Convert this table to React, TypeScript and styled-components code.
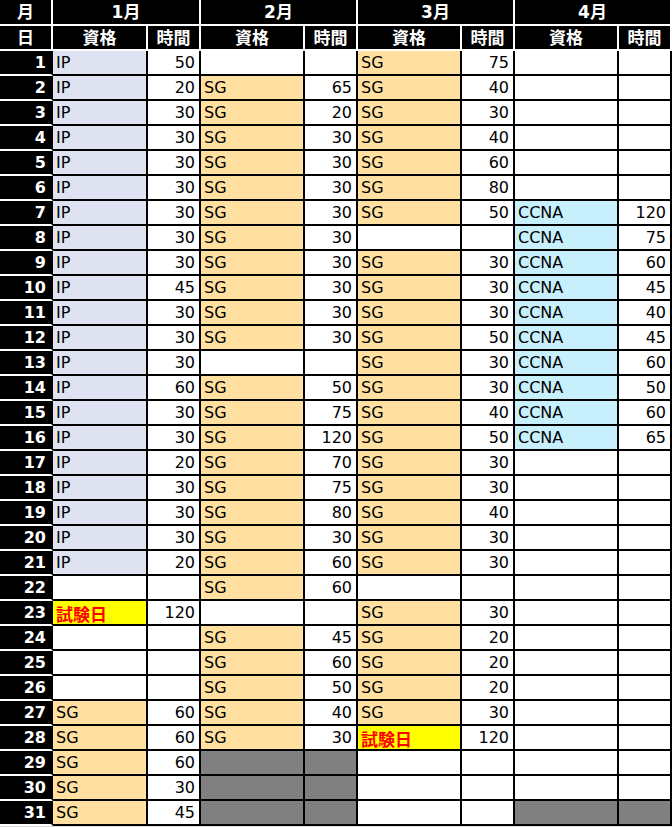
import styled, { createGlobalStyle } from "styled-components";

const GlobalStyle = createGlobalStyle`
  html, body {
    margin: 0;
    padding: 0;
    background: #ffffff;
  }
  body {
    font-family: "DejaVu Sans", "Noto Sans CJK JP", sans-serif;
  }
`;

type Kind = "IP" | "SG" | "CCNA" | "EXAM" | "EMPTY" | "GRAY";
type Entry = { kind: Kind; time?: number };

const fills: Record<Kind, string> = {
  IP: "#dfe3f1",
  SG: "#ffe0a0",
  CCNA: "#c8effc",
  EXAM: "#ffff00",
  EMPTY: "#ffffff",
  GRAY: "#808080",
};

const labels: Record<Kind, string> = {
  IP: "IP",
  SG: "SG",
  CCNA: "CCNA",
  EXAM: "試験日",
  EMPTY: "",
  GRAY: "",
};

const run = (kind: Kind, times: number[]): Entry[] =>
  times.map((time) => ({ kind, time }));
const blank = (n: number, kind: Kind = "EMPTY"): Entry[] =>
  Array.from({ length: n }, () => ({ kind }));

const months: { name: string; days: Entry[] }[] = [
  {
    name: "1月",
    days: [
      ...run("IP", [50, 20, 30, 30, 30, 30, 30, 30, 30, 45, 30, 30, 30, 60, 30, 30, 20, 30, 30, 30, 20]),
      ...blank(1),
      ...run("EXAM", [120]),
      ...blank(3),
      ...run("SG", [60, 60, 60, 30, 45]),
    ],
  },
  {
    name: "2月",
    days: [
      ...blank(1),
      ...run("SG", [65, 20, 30, 30, 30, 30, 30, 30, 30, 30, 30]),
      ...blank(1),
      ...run("SG", [50, 75, 120, 70, 75, 80, 30, 60, 60]),
      ...blank(1),
      ...run("SG", [45, 60, 50, 40, 30]),
      ...blank(3, "GRAY"),
    ],
  },
  {
    name: "3月",
    days: [
      ...run("SG", [75, 40, 30, 40, 60, 80, 50]),
      ...blank(1),
      ...run("SG", [30, 30, 30, 50, 30, 30, 40, 50, 30, 30, 40, 30, 30]),
      ...blank(1),
      ...run("SG", [30, 20, 20, 20, 30]),
      ...run("EXAM", [120]),
      ...blank(3),
    ],
  },
  {
    name: "4月",
    days: [
      ...blank(6),
      ...run("CCNA", [120, 75, 60, 45, 40, 45, 60, 50, 60, 65]),
      ...blank(14),
      ...blank(1, "GRAY"),
    ],
  },
];

const Sheet = styled.div`
  display: grid;
  grid-template-columns: 53px 95px 53px 104px 53px 104px 53px 104px 53px;
  grid-template-rows: 26px;
  grid-auto-rows: 25px;
  width: 672px;
  font-size: 16px;
  border-bottom: 1px solid #d9d9d9;
`;

const BaseCell = styled.div`
  box-sizing: border-box;
  display: flex;
  align-items: center;
  border-right: 2px solid #000000;
  border-bottom: 2px solid #000000;
  white-space: nowrap;
  overflow: hidden;
  line-height: 1;
`;

const HeadCell = styled(BaseCell)<{ $span?: number }>`
  grid-column: span ${(p) => p.$span ?? 1};
  justify-content: center;
  background: #000000;
  color: #ffffff;
  font-size: 17px;
  font-weight: bold;
  border-color: #ffffff;
  padding-top: 1px;
`;

const DayCell = styled(BaseCell)`
  justify-content: flex-end;
  padding: 1px 5px 0 0;
  background: #000000;
  color: #ffffff;
  font-weight: bold;
  border-bottom-color: #ffffff;
`;

const NameCell = styled(BaseCell)<{ $kind: Kind }>`
  padding: 1px 0 0 3px;
  background: ${(p) => fills[p.$kind]};
  color: ${(p) => (p.$kind === "EXAM" ? "#ff0000" : "#000000")};
  font-weight: ${(p) => (p.$kind === "EXAM" ? "bold" : "normal")};
  font-size: ${(p) => (p.$kind === "EXAM" ? "17px" : "16px")};
  font-family: ${(p) =>
    p.$kind === "EXAM" ? '"Noto Sans CJK JP", sans-serif' : "inherit"};
`;

const TimeCell = styled(BaseCell)<{ $gray?: boolean }>`
  justify-content: flex-end;
  padding: 1px 4px 0 0;
  background: ${(p) => (p.$gray ? fills.GRAY : "#ffffff")};
  color: #000000;
`;

const days = Array.from({ length: 31 }, (_, i) => i + 1);

export default function App() {
  return (
    <>
      <GlobalStyle />
      <Sheet>
        <HeadCell>月</HeadCell>
        {months.map((m) => (
          <HeadCell key={m.name} $span={2}>
            {m.name}
          </HeadCell>
        ))}
        <HeadCell>日</HeadCell>
        {months.map((m) => [
          <HeadCell key={m.name + "q"}>資格</HeadCell>,
          <HeadCell key={m.name + "t"}>時間</HeadCell>,
        ])}
        {days.map((d) => [
          <DayCell key={"d" + d}>{d}</DayCell>,
          ...months.map((m) => {
            const e = m.days[d - 1];
            return [
              <NameCell key={m.name + d + "q"} $kind={e.kind}>
                {labels[e.kind]}
              </NameCell>,
              <TimeCell key={m.name + d + "t"} $gray={e.kind === "GRAY"}>
                {e.time ?? ""}
              </TimeCell>,
            ];
          }),
        ])}
      </Sheet>
    </>
  );
}
